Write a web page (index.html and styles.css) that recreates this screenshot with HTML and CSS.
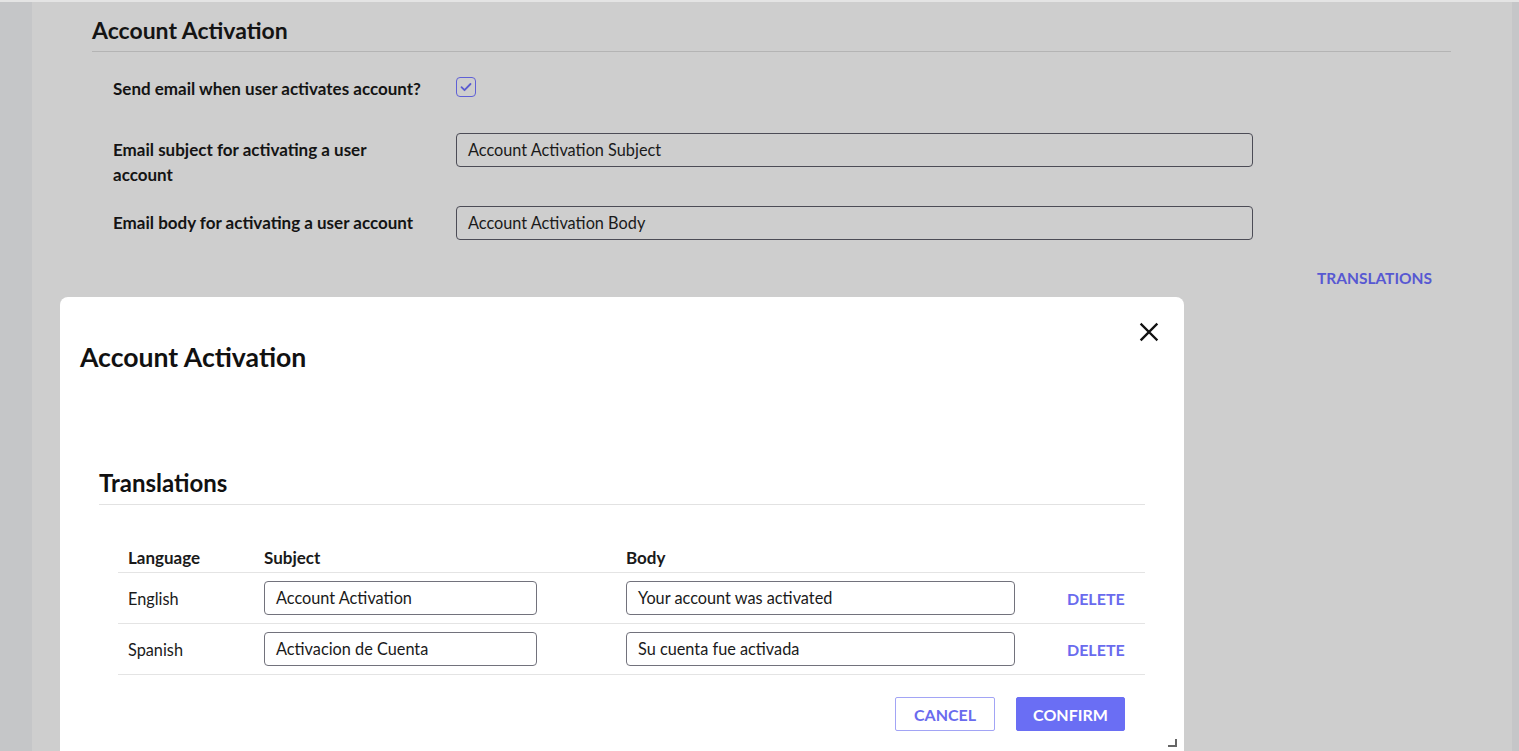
FILE: index.html
```html
<!DOCTYPE html>
<html lang="en">
<head>
<meta charset="utf-8">
<title>Account Activation</title>
<link rel="stylesheet" href="styles.css">
</head>
<body>
<div class="app">
  <div class="strip strip-left"></div>
  <main class="main">
    <h2 class="section-title">Account Activation</h2>
    <div class="form">
      <div class="row row-check">
        <label class="label">Send email when user activates account?</label>
        <span class="checkbox">
          <svg viewBox="0 0 20 20" width="20" height="20"><path d="M5.5 10.2l3 3 6-6.2" fill="none" stroke="#5a5bd0" stroke-width="1.8" stroke-linecap="round" stroke-linejoin="round"/></svg>
        </span>
      </div>
      <div class="row row-subject">
        <label class="label">Email subject for activating a user account</label>
        <div class="input input-main">Account Activation Subject</div>
      </div>
      <div class="row row-body">
        <label class="label">Email body for activating a user account</label>
        <div class="input input-main">Account Activation Body</div>
      </div>
      <div class="link-row"><a class="link">TRANSLATIONS</a></div>
    </div>
  </main>
  <div class="strip strip-right"></div>

  <div class="modal">
    <div class="modal-header">
      <h1 class="modal-title">Account Activation</h1>
      <button class="close" aria-label="Close">
        <svg viewBox="0 0 24 24" width="24" height="24"><path d="M4.5 4.5l15 15M19.5 4.5l-15 15" stroke="#111" stroke-width="2.4" stroke-linecap="square" fill="none"/></svg>
      </button>
    </div>
    <div class="modal-body">
      <h3 class="sub-title">Translations</h3>
      <div class="table">
        <div class="tr th">
          <div class="cell">Language</div>
          <div class="cell">Subject</div>
          <div class="cell">Body</div>
          <div class="cell"></div>
        </div>
        <div class="tr">
          <div class="cell">English</div>
          <div class="cell"><div class="input input-sub">Account Activation</div></div>
          <div class="cell"><div class="input input-body">Your account was activated</div></div>
          <div class="cell"><a class="del">DELETE</a></div>
        </div>
        <div class="tr">
          <div class="cell">Spanish</div>
          <div class="cell"><div class="input input-sub">Activacion de Cuenta</div></div>
          <div class="cell"><div class="input input-body">Su cuenta fue activada</div></div>
          <div class="cell"><a class="del">DELETE</a></div>
        </div>
      </div>
      <div class="actions">
        <button class="btn btn-cancel">CANCEL</button>
        <button class="btn btn-confirm">CONFIRM</button>
      </div>
    </div>
    <span class="grip"></span>
  </div>
</div>
</body>
</html>
```

FILE: styles.css
```css
* { box-sizing: border-box; }
html, body { margin: 0; padding: 0; }
body {
  font-family: Lato, "Noto Sans", sans-serif;
  background: #cecece;
  color: #141414;
  overflow: hidden;
  height: 751px;
}
.app {
  position: relative;
  display: flex;
  height: 751px;
  border-top: 2px solid #e4e4e4;
}
.strip { background: #c5c6c8; }
.strip-left { width: 32px; }
.strip-right { width: 7px; }
.main {
  flex: 1;
  padding: 0 61px 0 60px;
}
.section-title {
  margin: 0;
  padding: 14px 0 7px;
  font-size: 23px;
  line-height: 28px;
  font-weight: 700;
  border-bottom: 1px solid #b4b4b4;
}
.form { padding: 0 0 0 21px; }
.row {
  display: flex;
  align-items: flex-start;
}
.label {
  width: 343px;
  padding-right: 33px;
  font-size: 17px;
  font-weight: 700;
  line-height: 25px;
}
.row-check { margin-top: 24px; }
.row-subject { margin-top: 32px; }
.row-body { margin-top: 19px; }
.row-subject .label, .row-body .label { padding-top: 4px; }
.checkbox {
  width: 20px;
  height: 20px;
  margin-top: 1px;
  border: 1.5px solid #5f60d6;
  border-radius: 4px;
  display: flex;
}
.checkbox svg { margin: -1.5px; }
.input {
  height: 34px;
  border-radius: 4px;
  font-size: 16.3px;
  line-height: 32px;
  padding: 0 11px;
  white-space: nowrap;
  overflow: hidden;
}
.input-main {
  width: 797px;
  border: 1px solid #4c4c56;
  color: #1a1a1a;
}
.link-row {
  display: flex;
  justify-content: flex-end;
  margin-top: 28px;
  padding-right: 19px;
}
.link {
  font-size: 15.5px;
  font-weight: 700;
  line-height: 20px;
  color: #5758d2;
}

/* modal */
.modal {
  position: absolute;
  left: 60px;
  top: 295px;
  width: 1124px;
  height: 456px;
  background: #fff;
  border-radius: 8px 8px 0 0;
}
.modal-header {
  display: flex;
  justify-content: space-between;
  align-items: flex-start;
  height: 107px;
  padding: 0 23px 0 20px;
}
.modal-title {
  margin: 43px 0 0;
  font-size: 26.6px;
  line-height: 34px;
  font-weight: 700;
  color: #111;
}
.close {
  margin-top: 23px;
  width: 24px;
  height: 24px;
  padding: 0;
  border: 0;
  background: none;
  display: flex;
}
.modal-body { padding: 0 39px; }
.sub-title {
  margin: 64px 0 0;
  padding-bottom: 6px;
  font-size: 24px;
  line-height: 30px;
  font-weight: 700;
  border-bottom: 1px solid #e2e2e2;
  color: #111;
}
.table {
  margin: 39px 0 0 19px;
}
.tr {
  display: grid;
  grid-template-columns: 136px 362px 441px 1fr;
  align-items: center;
  height: 51px;
  border-bottom: 1px solid #e4e4e4;
  font-size: 16.3px;
  color: #1a1a1a;
}
.tr.th {
  height: 29px;
  font-size: 17px;
  font-weight: 700;
  align-items: start;
  line-height: 28px;
}
.cell { padding-left: 10px; }
.input-sub { width: 273px; border: 1px solid #72727c; color: #1a1a1a; }
.input-body { width: 389px; border: 1px solid #72727c; color: #1a1a1a; }
.del {
  font-weight: 700;
  font-size: 16px;
  color: #6a6bee;
}
.actions {
  display: flex;
  justify-content: flex-end;
  gap: 21px;
  margin-top: 22px;
  padding-right: 20px;
}
.btn {
  height: 34px;
  font-family: inherit;
  font-size: 16px;
  font-weight: 700;
  border-radius: 2px;
  cursor: pointer;
}
.btn-cancel {
  width: 100px;
  background: #fff;
  color: #6a6bee;
  border: 1px solid #a2a4f5;
}
.btn-confirm {
  width: 109px;
  background: #6a6ef4;
  color: #fff;
  border: 1px solid #6a6ef4;
}
.grip {
  position: absolute;
  right: 7px;
  bottom: 6px;
  width: 9px;
  height: 8px;
  border-right: 2px solid #666;
  border-bottom: 2px solid #666;
}
```
